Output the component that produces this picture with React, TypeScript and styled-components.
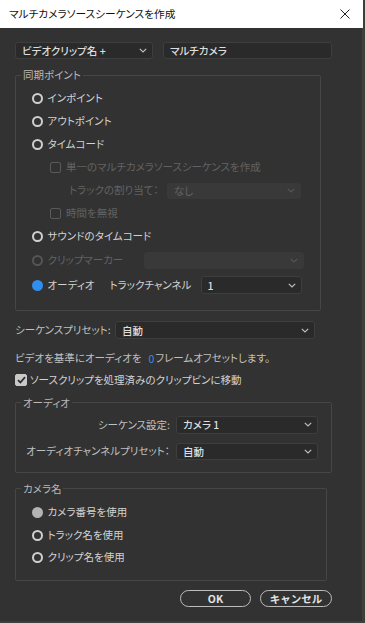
import styled, { createGlobalStyle } from "styled-components";

const GlobalStyle = createGlobalStyle`
  html, body {
    margin: 0;
    padding: 0;
    background: #3e3f3b;
  }
  body {
    font-family: "Noto Sans CJK JP", "Noto Sans", sans-serif;
    font-feature-settings: "palt";
    -webkit-font-smoothing: antialiased;
  }
`;

const Window = styled.div`
  width: 362px;
  height: 621px;
  background: #323232;
  display: flex;
  flex-direction: column;
`;

const TitleBar = styled.div`
  height: 28px;
  width: 363px;
  background: #ffffff;
  display: flex;
  align-items: center;
  justify-content: space-between;
  padding: 0 9px;
  box-sizing: border-box;
`;

const Title = styled.span`
  font-size: 10.7px;
  color: #111;
  line-height: 1;
`;

const Close = styled.svg`
  width: 10px;
  height: 10px;
  margin-right: 4px;
`;

const Body = styled.div`
  padding: 13.5px 0 0 15px;
  display: flex;
  flex-direction: column;
  font-size: 10.5px;
  color: #c2c2c2;
`;

const TopRow = styled.div`
  display: flex;
  gap: 10px;
  height: 17px;
`;

const Field = styled.div<{ $width: number; $height?: number; $disabled?: boolean }>`
  width: ${(p) => p.$width}px;
  height: ${(p) => p.$height ?? 17}px;
  box-sizing: border-box;
  display: flex;
  align-items: center;
  justify-content: space-between;
  padding: 0 5px 0 6px;
  border-radius: 3px;
  background: ${(p) => (p.$disabled ? "#393939" : "#2a2a2a")};
  border: 1px solid ${(p) => (p.$disabled ? "#393939" : "#3e3e3e")};
  color: ${(p) => (p.$disabled ? "#5c5c5c" : "#dddddd")};
  font-size: 10.5px;
  font-weight: 500;
  flex: none;
`;

const Group = styled.fieldset<{ $width: number; $top: number; $pad: string }>`
  width: ${(p) => p.$width}px;
  box-sizing: border-box;
  margin: ${(p) => p.$top}px 0 0 0;
  padding: ${(p) => p.$pad};
  border: 1px solid #464646;
  border-radius: 2px;
  min-width: 0;
`;

const Legend = styled.legend`
  padding: 0 2px;
  font-size: 10.5px;
  line-height: 14px;
  color: #b9b9b9;
`;

const Row = styled.div<{ $h?: number; $indent?: number; $gap?: number }>`
  display: flex;
  align-items: center;
  height: ${(p) => p.$h ?? 23}px;
  padding-left: ${(p) => p.$indent ?? 11}px;
  gap: ${(p) => p.$gap ?? 5}px;
`;

const Label = styled.span<{ $disabled?: boolean; $bright?: boolean }>`
  color: ${(p) => (p.$disabled ? "#626262" : p.$bright ? "#d2d2d2" : "#c0c0c0")};
  white-space: nowrap;
  line-height: 1;
`;

type RadioState = "off" | "on" | "muted" | "dim";

const Radio = styled.span<{ $state: RadioState }>`
  width: 11px;
  height: 11px;
  box-sizing: border-box;
  border-radius: 50%;
  flex: none;
  border: 2px solid
    ${(p) =>
      p.$state === "on" ? "#2e8ff0" : p.$state === "muted" ? "#b4b4b4" : p.$state === "dim" ? "#555" : "#cfcfcf"};
  background: ${(p) => (p.$state === "on" ? "#2e8ff0" : p.$state === "muted" ? "#b4b4b4" : "transparent")};
  margin-right: -0.5px;
`;

const Check = styled.span<{ $checked?: boolean; $disabled?: boolean }>`
  width: ${(p) => (p.$checked ? 12 : 11)}px;
  height: ${(p) => (p.$checked ? 12 : 11)}px;
  box-sizing: border-box;
  border-radius: 2px;
  flex: none;
  display: flex;
  align-items: center;
  justify-content: center;
  border: 1px solid ${(p) => (p.$checked ? "#c9c9c9" : p.$disabled ? "#5a5a5a" : "#c9c9c9")};
  background: ${(p) => (p.$checked ? "#c9c9c9" : "transparent")};
`;

const Line = styled.div<{ $top: number; $h?: number; $gap?: number }>`
  display: flex;
  align-items: center;
  margin-top: ${(p) => p.$top}px;
  height: ${(p) => p.$h ?? 18}px;
  gap: ${(p) => p.$gap ?? 4}px;
`;

const Accent = styled.span`
  color: #3a8ee6;
  margin: 0 1px 0 7px;
`;

const SettingGrid = styled.div`
  display: grid;
  grid-template-columns: 149px 142px;
  column-gap: 6px;
  row-gap: 6.7px;
  grid-auto-rows: 20px;
  align-items: center;
`;

const RightLabel = styled(Label)`
  text-align: right;
`;

const ButtonRow = styled.div`
  width: 317px;
  display: flex;
  justify-content: flex-end;
  gap: 9px;
  margin-top: 9.5px;
`;

const Button = styled.button<{ $width: number }>`
  width: ${(p) => p.$width}px;
  height: 17px;
  box-sizing: border-box;
  border: 1.5px solid #bcbcbc;
  border-radius: 9px;
  background: transparent;
  color: #e4e4e4;
  font-family: inherit;
  font-size: 10.5px;
  font-weight: 700;
  padding: 0;
  line-height: 1;
`;

function Chevron({ dim }: { dim?: boolean }) {
  return (
    <svg width="8" height="5" viewBox="0 0 8 5" style={{ flex: "none" }}>
      <polyline points="0.8,0.8 4,4 7.2,0.8" fill="none" stroke={dim ? "#555" : "#bdbdbd"} strokeWidth="1.2" />
    </svg>
  );
}

function Select({ value, width, height, disabled }: { value: string; width: number; height?: number; disabled?: boolean }) {
  return (
    <Field $width={width} $height={height} $disabled={disabled}>
      <span>{value}</span>
      <Chevron dim={disabled} />
    </Field>
  );
}

function Tick() {
  return (
    <svg width="9" height="8" viewBox="0 0 9 8">
      <polyline points="1,4.2 3.4,6.5 8,1.2" fill="none" stroke="#2e2e2e" strokeWidth="1.8" />
    </svg>
  );
}

export default function App() {
  return (
    <>
      <GlobalStyle />
      <Window>
        <TitleBar>
          <Title>マルチカメラソースシーケンスを作成</Title>
          <Close viewBox="0 0 10 10">
            <path d="M0.5 0.5 L9.5 9.5 M9.5 0.5 L0.5 9.5" stroke="#222" strokeWidth="1" />
          </Close>
        </TitleBar>
        <Body>
          <TopRow>
            <Select value="ビデオクリップ名 +" width={138} />
            <Field $width={169}>
              <span>マルチカメラ</span>
            </Field>
          </TopRow>

          <Group $width={306} $top={9.5} $pad="5px 5px 12px 5px">
            <Legend>同期ポイント</Legend>
            <Row>
              <Radio $state="off" />
              <Label $bright>インポイント</Label>
            </Row>
            <Row>
              <Radio $state="off" />
              <Label $bright>アウトポイント</Label>
            </Row>
            <Row>
              <Radio $state="off" />
              <Label $bright>タイムコード</Label>
            </Row>
            <Row $indent={29}>
              <Check $disabled />
              <Label $disabled>単一のマルチカメラソースシーケンスを作成</Label>
            </Row>
            <Row $indent={48} $gap={0}>
              <Label $disabled style={{ width: 98 }}>
                トラックの割り当て：
              </Label>
              <Select value="なし" width={134} height={16} disabled />
            </Row>
            <Row $indent={29}>
              <Check $disabled />
              <Label $disabled>時間を無視</Label>
            </Row>
            <Row>
              <Radio $state="off" />
              <Label $bright>サウンドのタイムコード</Label>
            </Row>
            <Row $h={24}>
              <Radio $state="dim" />
              <Label $disabled style={{ width: 91 }}>
                クリップマーカー
              </Label>
              <Select value="" width={160} height={17} disabled />
            </Row>
            <Row $h={26}>
              <Radio $state="on" />
              <Label $bright style={{ width: 57 }}>
                オーディオ
              </Label>
              <Label $bright style={{ width: 86 }}>
                トラックチャンネル
              </Label>
              <Select value="1" width={101} height={18} />
            </Row>
          </Group>

          <Line $top={10} $gap={6}>
            <Label style={{ width: 94 }}>シーケンスプリセット:</Label>
            <Select value="自動" width={200} height={17.5} />
          </Line>
          <Line $top={10.3} $gap={0}>
            <Label>ビデオを基準にオーディオを</Label>
            <Accent>0</Accent>
            <Label>フレームオフセットします。</Label>
          </Line>
          <Line $top={3.7} $gap={3}>
            <Check $checked>
              <Tick />
            </Check>
            <Label $bright>ソースクリップを処理済みのクリップビンに移動</Label>
          </Line>

          <Group $width={317} $top={6.7} $pad="5.3px 5px 10px 5px">
            <Legend>オーディオ</Legend>
            <SettingGrid>
              <RightLabel>シーケンス設定:</RightLabel>
              <Select value="カメラ 1" width={142} height={17.5} />
              <RightLabel>オーディオチャンネルプリセット：</RightLabel>
              <Select value="自動" width={142} height={17.5} />
            </SettingGrid>
          </Group>

          <Group $width={312} $top={9} $pad="5.7px 5px 11px 5px">
            <Legend>カメラ名</Legend>
            <Row $h={22.5}>
              <Radio $state="muted" />
              <Label $bright>カメラ番号を使用</Label>
            </Row>
            <Row $h={22.5}>
              <Radio $state="off" />
              <Label $bright>トラック名を使用</Label>
            </Row>
            <Row $h={22.5}>
              <Radio $state="off" />
              <Label $bright>クリップ名を使用</Label>
            </Row>
          </Group>

          <ButtonRow>
            <Button $width={71}>OK</Button>
            <Button $width={72}>キャンセル</Button>
          </ButtonRow>
        </Body>
      </Window>
    </>
  );
}
